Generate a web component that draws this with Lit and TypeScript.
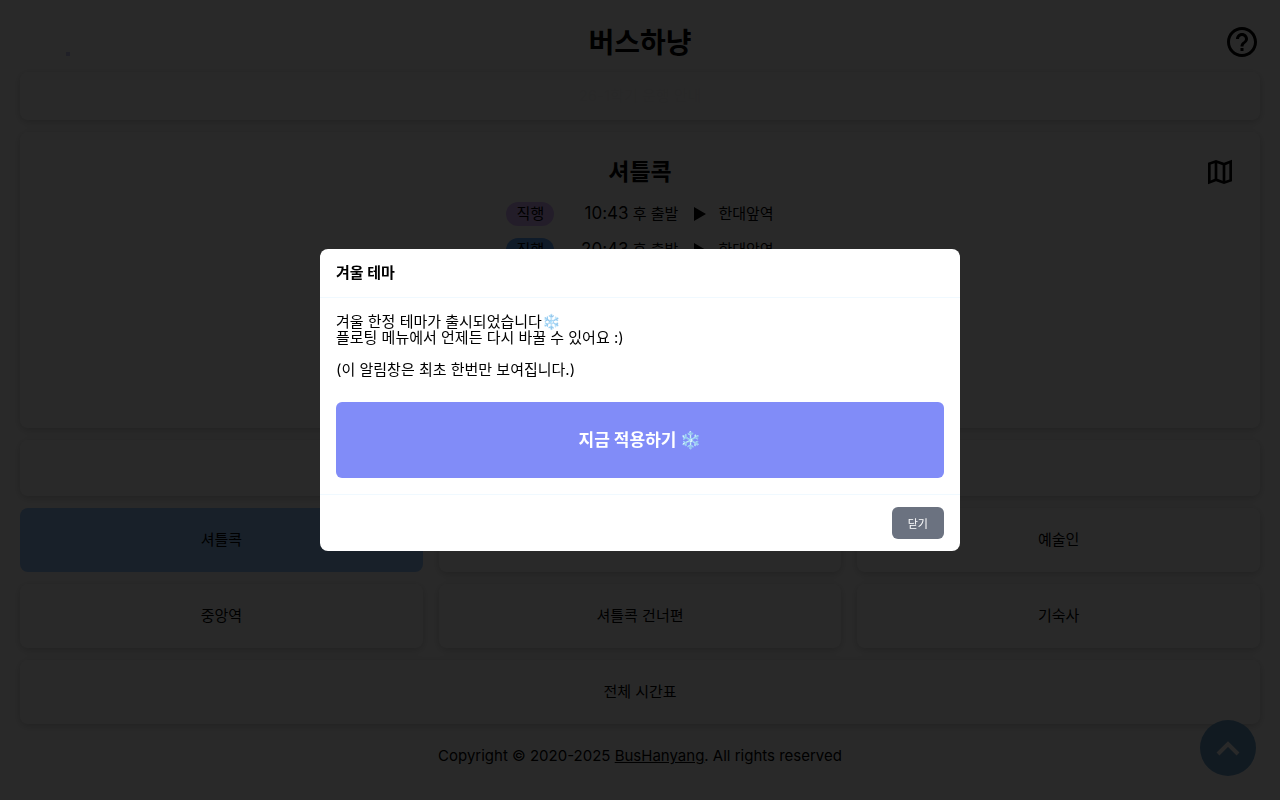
import { LitElement, html, css } from "lit";
import { customElement, property } from "lit/decorators.js";

@customElement("notice-modal")
class NoticeModal extends LitElement {
  static styles = css`
    :host {
      position: fixed;
      inset: 0;
      z-index: 10;
      display: flex;
      align-items: center;
      justify-content: center;
      background: rgba(0, 0, 0, 0.84);
    }
    .panel {
      box-sizing: border-box;
      width: 50%;
      min-width: 320px;
      background: #fff;
      border-radius: 8px;
      color: #000;
      overflow: hidden;
    }
    h2 {
      margin: 0;
      padding: 16px;
      font-size: 15px;
      line-height: 16px;
      font-weight: 700;
      border-bottom: 1px solid #f0f9ff;
    }
    .body {
      padding: 16px;
      font-size: 15px;
      line-height: 16px;
    }
    p {
      margin: 0 0 16px;
    }
    button {
      font-family: inherit;
      border: 0;
      border-radius: 6px;
      color: #fff;
      cursor: pointer;
    }
    .apply {
      display: block;
      width: 100%;
      height: 76px;
      margin-top: 24px;
      padding: 0 0 4px;
      background: #818cf8;
      font-size: 17px;
      font-weight: 700;
    }
    footer {
      display: flex;
      justify-content: flex-end;
      padding: 12px 16px;
      border-top: 1px solid #f0f9ff;
    }
    .close {
      height: 32px;
      padding: 0 16px;
      background: #6b7280;
      font-size: 11px;
    }
  `;

  render() {
    return html`
      <section class="panel" role="dialog" aria-modal="true" aria-labelledby="title">
        <h2 id="title">겨울 테마</h2>
        <div class="body">
          <p>겨울 한정 테마가 출시되었습니다❄️<br />플로팅 메뉴에서 언제든 다시 바꿀 수 있어요 :)</p>
          <p>(이 알림창은 최초 한번만 보여집니다.)</p>
          <button class="apply" type="button">지금 적용하기 ❄️</button>
        </div>
        <footer><button class="close" type="button">닫기</button></footer>
      </section>
    `;
  }
}

@customElement("shuttle-row")
class ShuttleRow extends LitElement {
  @property() kind = "";
  @property() tone = "violet";
  @property() time = "";
  @property() to = "";

  static styles = css`
    :host {
      display: grid;
      grid-template-columns: 48px 124px 24px auto;
      justify-content: center;
      align-items: center;
      height: 24px;
      font-size: 15px;
      line-height: 24px;
    }
    .badge {
      border-radius: 12px;
      text-align: center;
    }
    .violet {
      background: #d8b4fe;
    }
    .blue {
      background: #60a5fa;
    }
    .time {
      text-align: right;
    }
    .clock {
      font-size: 17px;
      line-height: 16px;
    }
    .arrow {
      width: 12px;
      height: 14px;
      margin-left: 16px;
    }
    .dest {
      margin-left: 16px;
    }
  `;

  render() {
    return html`
      <span class="badge ${this.tone}">${this.kind}</span>
      <span class="time"><span class="clock">${this.time}</span> 후 출발</span>
      <svg class="arrow" viewBox="0 0 12 14"><path d="M0 0L12 7L0 14z" /></svg>
      <span class="dest">${this.to}</span>
    `;
  }
}

@customElement("app-root")
class AppRoot extends LitElement {
  static styles = css`
    :host {
      display: block;
      position: relative;
      min-height: 100vh;
      box-sizing: border-box;
      padding: 0 20px;
      background: #fff;
      color: #000;
      font-family: Inter, "Noto Sans CJK KR", sans-serif;
    }
    button {
      font-family: inherit;
      color: inherit;
      border: 0;
      padding: 0;
      background: none;
      cursor: pointer;
    }
    svg {
      display: block;
    }
    .top {
      display: grid;
      grid-template-columns: 1fr auto 1fr;
      align-items: center;
      height: 72px;
      padding-top: 12px;
      box-sizing: border-box;
    }
    h1 {
      grid-column: 2;
      margin: 0;
      padding-top: 2px;
      font-size: 28px;
      line-height: 40px;
      font-weight: 700;
    }
    .help {
      justify-self: end;
    }
    main {
      display: flex;
      flex-direction: column;
      gap: 12px;
    }
    .card {
      box-sizing: border-box;
      background: #fff;
      border-radius: 8px;
      box-shadow: 0 2px 8px rgba(0, 0, 0, 0.2);
      font-size: 15px;
      text-align: center;
    }
    .news {
      height: 48px;
      line-height: 48px;
      color: #f5f5f5;
    }
    .board {
      height: 296px;
      padding: 20px 24px;
    }
    .head {
      display: grid;
      grid-template-columns: 1fr auto 1fr;
      align-items: center;
      height: 40px;
      margin-bottom: 10px;
    }
    h2 {
      grid-column: 2;
      margin: 0;
      font-size: 23px;
      line-height: 40px;
      font-weight: 700;
    }
    .map {
      justify-self: end;
    }
    .rows {
      display: grid;
      gap: 12px;
    }
    .strip {
      height: 56px;
    }
    .stops {
      display: grid;
      grid-template-columns: repeat(3, 1fr);
      gap: 12px 16px;
    }
    .stop,
    .all {
      height: 64px;
      padding-bottom: 4px;
    }
    .on {
      background: #93c5fd;
      box-shadow: none;
    }
    .copy {
      margin: 0;
      padding: 20px 0 32px;
      text-align: center;
      font-size: 15px;
      line-height: 24px;
    }
    a {
      color: inherit;
    }
    .fab {
      position: fixed;
      right: 24px;
      bottom: 24px;
      width: 56px;
      height: 56px;
      border-radius: 50%;
      background: #6aa2ce;
      display: grid;
      place-items: center;
    }
    .flake {
      position: absolute;
      left: 66px;
      top: 52px;
      width: 4px;
      height: 4px;
      background: #c7c7f0;
    }
  `;

  stops = ["셔틀콕", "한대앞역", "예술인", "중앙역", "셔틀콕 건너편", "기숙사"];

  render() {
    return html`
      <header class="top">
        <h1>버스하냥</h1>
        <button class="help" type="button" aria-label="도움말">
          <svg width="36" height="36" viewBox="0 0 24 24">
            <path d="M11 18h2v-2h-2v2zm1-16C6.480 2 2 6.480 2 12s4.480 10 10 10 10-4.480 10-10S17.520 2 12 2zm0 18c-4.410 0-8-3.590-8-8s3.590-8 8-8 8 3.590 8 8-3.590 8-8 8zm0-14c-2.210 0-4 1.790-4 4h2c0-1.100.9-2 2-2s2 .9 2 2c0 2-3 1.750-3 5h2c0-2.250 3-2.500 3-5 0-2.210-1.790-4-4-4z" />
          </svg>
        </button>
      </header>
      <main>
        <div class="card news">26-1학기 운행 안내</div>
        <section class="card board">
          <div class="head">
            <h2>셔틀콕</h2>
            <button class="map" type="button" aria-label="지도">
              <svg width="32" height="32" viewBox="0 0 24 24">
                <path d="M15 5.100L9 3 3 5.020v16.200l6-2.330 6 2.100 6-2.020V2.770L15 5.100zM10 5.470l4 1.400v11.660l-4-1.400V5.470zm-5 .99l3-1.010v11.700l-3 1.160V6.460zm14 11.080l-3 1.010V6.860l3-1.160v11.840z" />
              </svg>
            </button>
          </div>
          <div class="rows">
            <shuttle-row kind="직행" tone="violet" time="10:43" to="한대앞역"></shuttle-row>
            <shuttle-row kind="직행" tone="blue" time="20:43" to="한대앞역"></shuttle-row>
          </div>
        </section>
        <div class="card strip"></div>
        <nav class="stops">
          ${this.stops.map(
            (name, i) => html`<button type="button" class="card stop ${i === 0 ? "on" : ""}">${name}</button>`
          )}
        </nav>
        <button type="button" class="card all">전체 시간표</button>
      </main>
      <p class="copy">Copyright © 2020-2025 <a href="#">BusHanyang</a>. All rights reserved</p>
      <span class="flake"></span>
      <button class="fab" type="button" aria-label="메뉴 열기">
        <svg width="24" height="16" viewBox="0 0 24 16">
          <path d="M2 14L12 4L22 14" fill="none" stroke="#fff" stroke-width="4" />
        </svg>
      </button>
      <notice-modal></notice-modal>
    `;
  }
}
